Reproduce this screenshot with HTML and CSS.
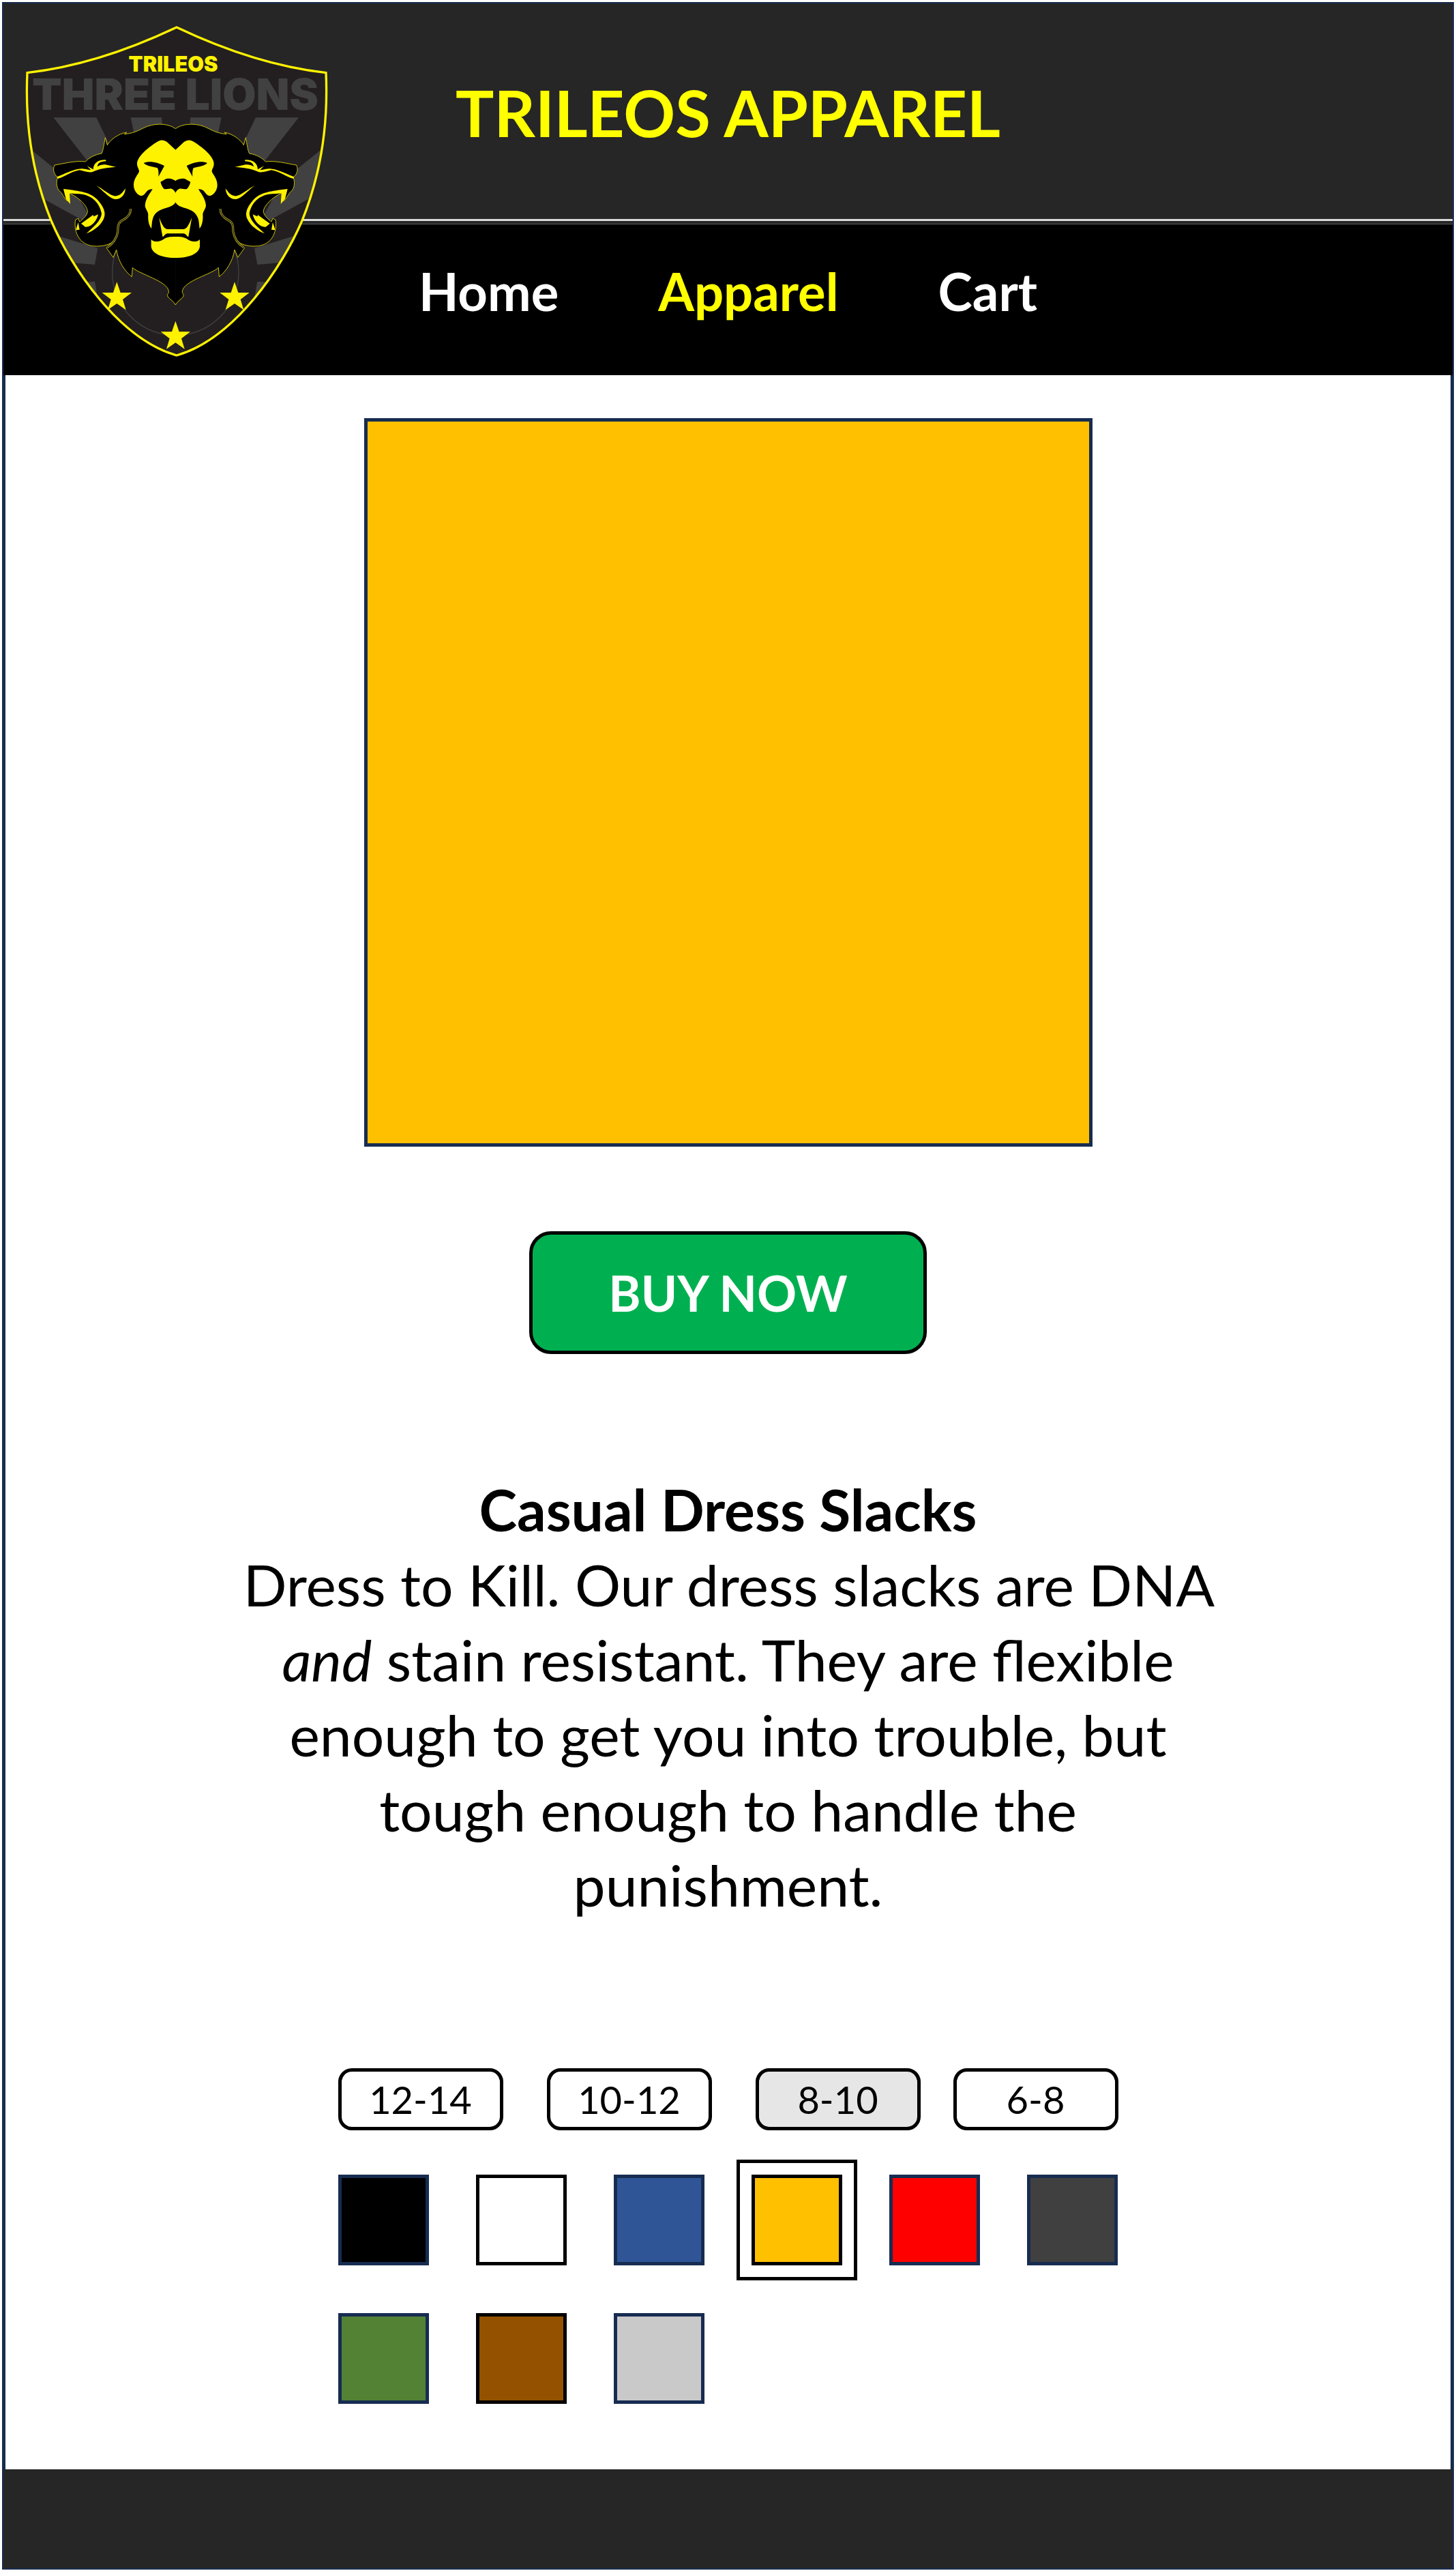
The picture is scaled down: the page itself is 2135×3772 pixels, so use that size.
FILE: index.html
```html
<!DOCTYPE html>
<html lang="en">
<head>
<meta charset="utf-8">
<meta name="viewport" content="width=device-width, initial-scale=1">
<title>Trileos Apparel</title>
<link rel="stylesheet" href="styles.css">
</head>
<body>
<div class="page">
  <header class="banner">
    <h1 class="brand">TRILEOS APPAREL</h1>
    <svg class="logo" viewBox="105 105 1341 1470" role="img" aria-label="Trileos Three Lions crest">
      <defs>
        <path id="shield" d="M777 120 Q430 285 120 320 C110 540 140 760 225 970 C310 1170 520 1490 777 1563 C1034 1490 1244 1170 1329 970 C1414 760 1444 540 1434 320 Q1124 285 777 120Z"/>
        <clipPath id="shield-clip"><use href="#shield"/></clipPath>
        <path id="star" d="M0 -68 L16 -21 H65 L26 9 L40 55 L0 27 L-40 55 L-26 9 L-65 -21 H-16Z"/>
        <g id="rays">
          <path d="M235 517H424L560 800L480 830ZM575 517H711L716 575L590 590ZM120 645L300 790L420 1000L100 825ZM240 1033L430 1092L417 1164L290 1153ZM350 1243L417 1238L430 1312L420 1340Z"/>
        </g>
        <g id="half-lion">
          <path class="mane" d="M772 566C745 545 695 540 650 555C620 566 600 585 547 590L557 582C520 588 485 615 472 638L463 605C458 630 455 660 447 675C415 680 390 695 376 711C330 705 280 720 240 726C232 745 235 765 254 780C246 800 248 830 264 842C272 845 280 870 296 884L300 845L318 856C345 870 385 905 385 930C385 945 365 965 350 975L344 960L332 967C325 1000 335 1083 425 1083C455 1083 485 1075 500 1060L468 1090L498 1132L512 1098C520 1150 550 1195 580 1217L583 1177C610 1205 735 1235 742 1280C745 1292 733 1290 738 1305C745 1315 765 1325 772 1341"/>
          <path class="seam" d="M575 918C575 945 560 958 540 968C515 980 520 1000 518 1020C512 1055 495 1073 472 1088"/>
          <path class="seam-core" d="M575 918C575 945 560 958 540 968C515 980 520 1000 518 1020C512 1055 495 1073 472 1088"/>
          <path class="gold" d="M773 660L735 625C715 610 700 618 690 625C650 650 603 690 603 720C603 735 612 745 612 752C612 765 588 780 588 815C588 840 610 862 622 861C643 860 640 830 671 832C665 845 640 870 638 905C640 920 652 930 652 945C650 970 655 990 666 1006C668 990 668 975 672 962C690 905 755 925 773 888Z"/>
          <path class="ink" d="M632 717C655 705 700 715 723 730L697 777C698 760 698 748 692 738C670 733 645 730 632 717ZM773 796C755 783 735 785 730 787L706 800C710 815 718 830 725 832C735 832 745 828 755 830C765 835 770 842 773 850Z"/>
          <path class="gold" d="M700 957L715 1040C720 1044 724 1030 735 1027H773V1008H735C720 1005 712 985 700 957ZM665 1053C680 1068 700 1062 715 1055C735 1041 750 1041 773 1041V1134C710 1134 670 1115 665 1085Z"/>
          <path class="gold" d="M383 730L410 745C412 720 425 703 465 703L467 709C440 710 430 718 428 733C440 725 455 722 470 725L510 734C470 738 440 740 405 757C385 760 370 752 350 748C310 755 285 778 254 786L250 778C290 762 330 742 360 742C380 744 392 747 400 748Z"/>
          <path class="gold" d="M423 816C445 825 490 865 510 862C530 860 540 845 552 829C550 860 530 878 505 876C480 872 450 835 423 816ZM279 831C350 840 400 845 430 880C465 920 465 945 455 965C440 995 410 1015 380 1027C410 1000 445 970 447 940C440 900 410 850 330 852L306 850L309 897L290 875ZM357 983L410 945L412 952L432 943C425 975 400 1000 375 998ZM344 978L350 1010L333 1012Z"/>
        </g>
      </defs>
      <use href="#shield" class="shield-fill"/>
      <g clip-path="url(#shield-clip)" class="rays">
        <use href="#rays"/>
        <use href="#rays" transform="translate(1549) scale(-1 1)"/>
      </g>
      <circle class="ring" cx="772" cy="1197" r="278"/>
      <text class="logo-name" x="762" y="315">TRILEOS</text>
      <text class="logo-team" x="771" y="482">THREE LIONS</text>
      <use href="#half-lion"/>
      <use href="#half-lion" transform="translate(1544) scale(-1 1)"/>
      <g class="gold">
        <use href="#star" x="514" y="1308"/>
        <use href="#star" x="1032" y="1308"/>
        <use href="#star" x="772" y="1480"/>
      </g>
      <use href="#shield" class="shield-edge"/>
    </svg>
  </header>
  <nav class="menu" aria-label="Main">
    <a href="#home">Home</a>
    <a href="#apparel" class="current" aria-current="page">Apparel</a>
    <a href="#cart">Cart</a>
  </nav>
  <main class="product">
    <div class="photo" role="img" aria-label="Casual dress slacks in gold"></div>
    <button type="button" class="buy">BUY NOW</button>
    <section class="details">
      <h2>Casual Dress Slacks</h2>
      <p>Dress to Kill. Our dress slacks are DNA <em>and</em> stain resistant. They are flexible enough to get you into trouble, but tough enough to handle the punishment.</p>
    </section>
    <form class="options">
      <div class="sizes" role="radiogroup" aria-label="Size">
        <label class="size"><input type="radio" name="size" value="12-14"><span>12-14</span></label>
        <label class="size"><input type="radio" name="size" value="10-12"><span>10-12</span></label>
        <label class="size"><input type="radio" name="size" value="8-10" checked><span>8-10</span></label>
        <label class="size"><input type="radio" name="size" value="6-8"><span>6-8</span></label>
      </div>
      <div class="colors" role="radiogroup" aria-label="Color">
        <input type="radio" name="color" class="swatch black" aria-label="Black">
        <input type="radio" name="color" class="swatch white" aria-label="White">
        <input type="radio" name="color" class="swatch blue" aria-label="Blue">
        <input type="radio" name="color" class="swatch yellow" aria-label="Gold" checked>
        <input type="radio" name="color" class="swatch red" aria-label="Red">
        <input type="radio" name="color" class="swatch charcoal" aria-label="Charcoal">
        <input type="radio" name="color" class="swatch green" aria-label="Green">
        <input type="radio" name="color" class="swatch brown" aria-label="Brown">
        <input type="radio" name="color" class="swatch silver" aria-label="Silver">
      </div>
    </form>
  </main>
  <footer class="footer"></footer>
</div>
</body>
</html>
```
FILE: styles.css
```css
:root {
  --navy: #172c51;
  --dark: #262626;
  --gold: #fff200;
}

* {
  box-sizing: border-box;
}

body {
  margin: 0;
  padding: 3px;
  background: #fff;
  color: #000;
  font-family: Lato, "Open Sans", sans-serif;
}

.page {
  position: relative;
  border: 2px solid var(--navy);
}

.banner {
  display: flex;
  justify-content: center;
  height: 324px;
  padding-top: 98px;
  background: var(--dark);
  border-bottom: 1px solid #5a5a5a;
  box-shadow: inset 0 -4px var(--dark), inset 0 -7px #d9d9d9;
}

.brand {
  margin: 0;
  font-size: 94px;
  line-height: 124px;
  font-weight: 700;
  color: #ff0;
}

.logo {
  position: absolute;
  left: 30px;
  top: 30px;
  width: 447px;
  height: 490px;
}

.shield-fill { fill: #231f20; }
.shield-edge { fill: none; stroke: var(--gold); stroke-width: 10; }
.rays { fill: #414141; }
.ring { fill: none; stroke: #414141; stroke-width: 4; }
.gold { fill: var(--gold); }
.ink { fill: #000; }
.mane { fill: #000; stroke: #c9bf0a; stroke-width: 3; }
.seam { fill: none; stroke: #b5ac12; stroke-width: 9; }
.seam-core { fill: none; stroke: #231f20; stroke-width: 4; }

.logo text {
  font-family: Inter, sans-serif;
  font-weight: 900;
  text-anchor: middle;
}

.logo .logo-name {
  font-size: 92px;
  fill: var(--gold);
}

.logo .logo-team {
  font-size: 191px;
  fill: #414141;
}

.menu {
  display: flex;
  justify-content: center;
  align-items: center;
  gap: 146px;
  height: 221px;
  padding-bottom: 26px;
  background: #000;
}

.menu a {
  color: #fff;
  font-size: 76px;
  line-height: 90px;
  font-weight: 700;
  text-decoration: none;
}

.menu .current {
  color: #ff0;
}

.product {
  display: flex;
  flex-direction: column;
  align-items: center;
  padding: 63px 0 96px;
  border: solid var(--navy);
  border-width: 0 3px;
}

.photo {
  width: 1068px;
  max-width: 100%;
  aspect-ratio: 1;
  background: #ffc000;
  border: 5px solid var(--navy);
}

.buy {
  width: 583px;
  height: 180px;
  margin-top: 124px;
  border: 5px solid #000;
  border-radius: 32px;
  background: #00b050;
  color: #fff;
  font: 700 72px/90px Lato, "Open Sans", sans-serif;
}

.details {
  max-width: 1440px;
  margin-top: 173px;
  font-size: 84px;
  line-height: 110px;
  text-align: center;
}

.details h2,
.details p {
  margin: 0;
  font-size: inherit;
}

.options {
  width: 1144px;
  margin-top: 214px;
}

.sizes {
  display: grid;
  grid-template-columns: 306px 306px 290px 242px;
}

.size {
  position: relative;
  display: flex;
  align-items: center;
  justify-content: center;
  width: 242px;
  height: 91px;
  border: 5px solid #000;
  border-radius: 20px;
  font-size: 56px;
  line-height: 68px;
}

.size:has(input:checked) {
  background: #e7e6e6;
}

.size input {
  position: absolute;
  inset: 0;
  margin: 0;
  opacity: 0;
}

.colors {
  display: grid;
  grid-template-columns: repeat(6, 133px);
  justify-content: space-between;
  row-gap: 70px;
  margin-top: 65px;
}

.swatch {
  appearance: none;
  width: 133px;
  height: 133px;
  margin: 0;
  border: 5px solid var(--navy);
  border-radius: 0;
}

.swatch:checked {
  outline: 5px solid #000;
  outline-offset: 17px;
}

.black { background: #000; }
.white { background: #fff; border-color: #000; }
.blue { background: #2f5597; }
.yellow { background: #ffc000; border-color: #000; }
.red { background: #f00; }
.charcoal { background: #404040; }
.green { background: #548235; }
.brown { background: #945200; border-color: #000; }
.silver { background: #c9c9c9; }

.footer {
  height: 145px;
  background: var(--dark);
}
```
